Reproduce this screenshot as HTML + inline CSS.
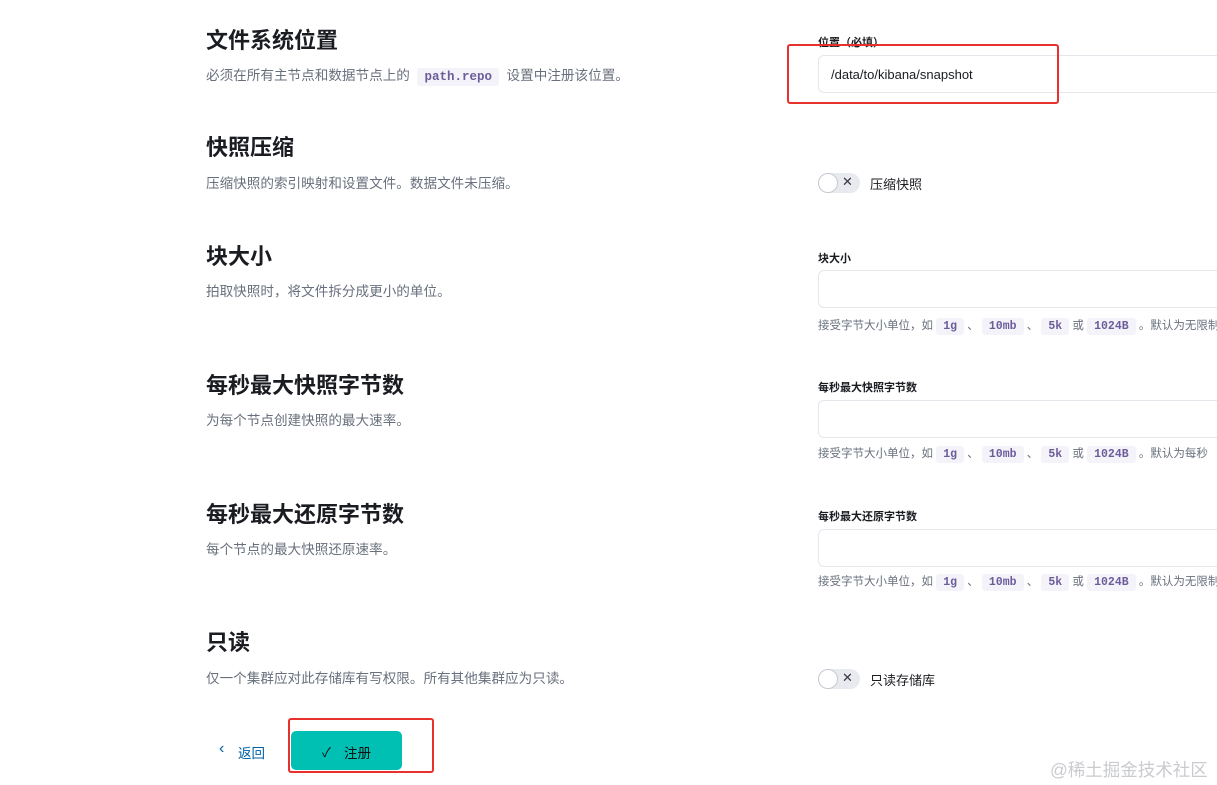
<!DOCTYPE html><html><head><meta charset="utf-8"><style>
body{margin:0;width:1217px;height:785px;background:#fff;position:relative;overflow:hidden;font-family:"Liberation Sans","Noto Sans CJK SC",sans-serif;color:#1a1c21}
.a{position:absolute;white-space:nowrap}
.t{font-size:22px;font-weight:700;color:#1a1c21}
.d{font-size:13.6px;color:#69707d}
.l{font-size:11px;font-weight:700;color:#1a1c21}
.in{position:absolute;left:818px;width:420px;height:38px;border:1px solid #e3e6ea;border-radius:6px;background:#fff;box-sizing:border-box}
.h{font-size:11.5px;color:#69707d}
code{font-family:"Liberation Mono",monospace;background:#f4f3fa;color:#6c5c9a;padding:2px 7px;border-radius:3px;font-size:11.5px;font-weight:700}
.tg{position:absolute;left:818px;width:42px;height:20px;border-radius:10px;background:#e8eaef}
.tg:before{content:"";position:absolute;left:0;top:0;width:18px;height:18px;border-radius:50%;background:#fff;border:1px solid #c4c9d2}
.tg:after{content:"✕";position:absolute;left:24px;top:1px;font-size:13px;color:#343741}
.red{position:absolute;border:2px solid #e8312d;border-radius:3px}
</style></head><body>
<div class="a t" style="left:206px;top:23px">文件系统位置</div>
<div class="a d" style="left:206px;top:64px">必须在所有主节点和数据节点上的 &nbsp;<code style="font-size:12.5px">path.repo</code>&nbsp; 设置中注册该位置。</div>
<div class="a t" style="left:206px;top:130px">快照压缩</div>
<div class="a d" style="left:206px;top:172px">压缩快照的索引映射和设置文件。数据文件未压缩。</div>
<div class="a t" style="left:206px;top:239px">块大小</div>
<div class="a d" style="left:206px;top:280px">拍取快照时，将文件拆分成更小的单位。</div>
<div class="a t" style="left:206px;top:368px">每秒最大快照字节数</div>
<div class="a d" style="left:206px;top:409px">为每个节点创建快照的最大速率。</div>
<div class="a t" style="left:206px;top:497px">每秒最大还原字节数</div>
<div class="a d" style="left:206px;top:538px">每个节点的最大快照还原速率。</div>
<div class="a t" style="left:206px;top:625px">只读</div>
<div class="a d" style="left:206px;top:667px">仅一个集群应对此存储库有写权限。所有其他集群应为只读。</div>

<div class="a l" style="left:818px;top:34px">位置（必填）</div>
<div class="in" style="top:55px"><span class="a" style="left:12px;top:11px;font-size:13px">/data/to/kibana/snapshot</span></div>
<div class="red" style="left:787px;top:44px;width:268px;height:56px"></div>
<div class="tg" style="top:173px"></div><div class="a" style="left:870px;top:174px;font-size:13px">压缩快照</div>

<div class="a l" style="left:818px;top:250px">块大小</div>
<div class="in" style="top:270px"></div>
<div class="a h" style="left:818px;top:317px">接受字节大小单位，如 <code>1g</code> 、 <code>10mb</code> 、 <code>5k</code> 或 <code>1024B</code> 。默认为无限制</div>

<div class="a l" style="left:818px;top:379px">每秒最大快照字节数</div>
<div class="in" style="top:400px"></div>
<div class="a h" style="left:818px;top:445px">接受字节大小单位，如 <code>1g</code> 、 <code>10mb</code> 、 <code>5k</code> 或 <code>1024B</code> 。默认为每秒</div>

<div class="a l" style="left:818px;top:508px">每秒最大还原字节数</div>
<div class="in" style="top:529px"></div>
<div class="a h" style="left:818px;top:573px">接受字节大小单位，如 <code>1g</code> 、 <code>10mb</code> 、 <code>5k</code> 或 <code>1024B</code> 。默认为无限制</div>

<div class="tg" style="top:669px"></div><div class="a" style="left:870px;top:670px;font-size:13px">只读存储库</div>

<div class="a" style="left:219px;top:740px;font-size:16px;color:#0061a6">‹</div>
<div class="a" style="left:238px;top:742px;font-size:13.5px;color:#0061a6">返回</div>
<div class="a" style="left:291px;top:731px;width:111px;height:39px;background:#00bfb3;border-radius:5px"></div>
<div class="a" style="left:322px;top:742px;font-size:13px;color:#111">✓</div>
<div class="a" style="left:344px;top:742px;font-size:13.5px;color:#111">注册</div>
<div class="red" style="left:288px;top:718px;width:142px;height:51px"></div>
<div class="a" style="left:1050px;top:757px;font-size:17.5px;color:#c9cbcf">@稀土掘金技术社区</div>
</body></html>
